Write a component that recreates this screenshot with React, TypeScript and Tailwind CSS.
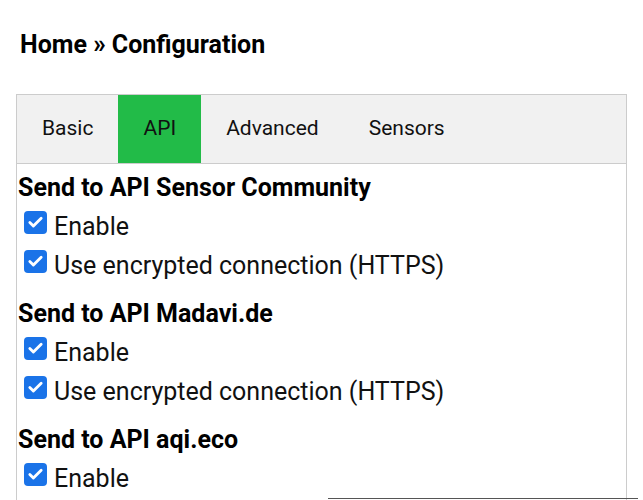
import { Check } from "lucide-react";

const tabs = ["Basic", "API", "Advanced", "Sensors"];

const sections = [
  { title: "Send to API Sensor Community", options: ["Enable", "Use encrypted connection (HTTPS)"] },
  { title: "Send to API Madavi.de", options: ["Enable", "Use encrypted connection (HTTPS)"] },
  { title: "Send to API aqi.eco", options: ["Enable"] },
];

function CheckRow({ label }: { label: string }) {
  return (
    <label className="flex h-[39px] items-center gap-[7px] pl-[6px]">
      <span className="flex h-[23px] w-[23px] shrink-0 items-center justify-center rounded-[4px] bg-[#1a73e8]">
        <Check className="h-[17px] w-[17px] text-white" strokeWidth={4} />
      </span>
      <span className="pt-[9px] text-[25px] leading-[30px] text-[#111]">{label}</span>
    </label>
  );
}

export default function App() {
  return (
    <div className="h-[500px] overflow-hidden bg-white px-4 pt-[26px] font-['Roboto',sans-serif] text-black">
      <h2 className="pl-[4px] text-[25px] font-bold leading-[38px]">Home » Configuration</h2>

      <div className="mt-[30px] border border-[#ccc]">
        <div className="flex h-[69px] border-b border-[#ccc] bg-[#f1f1f1]">
          {tabs.map(t => (
            <button
              key={t}
              className={`px-[25px] text-[21px] text-[#111] ${t === "API" ? "bg-[#22bb48]" : ""}`}
            >
              {t}
            </button>
          ))}
        </div>

        <div className="pl-px pt-[9px]">
          {sections.map((s, i) => (
            <div key={s.title} className={i < sections.length - 1 ? "mb-[18px]" : ""}>
              <div className="text-[25px] font-bold leading-[30px]">{s.title}</div>
              {s.options.map(o => (
                <CheckRow key={o} label={o} />
              ))}
            </div>
          ))}
          <div className="ml-[310px] mt-[4px] h-[20px] w-[310px] border-t border-[#555]" />
        </div>
      </div>
    </div>
  );
}
